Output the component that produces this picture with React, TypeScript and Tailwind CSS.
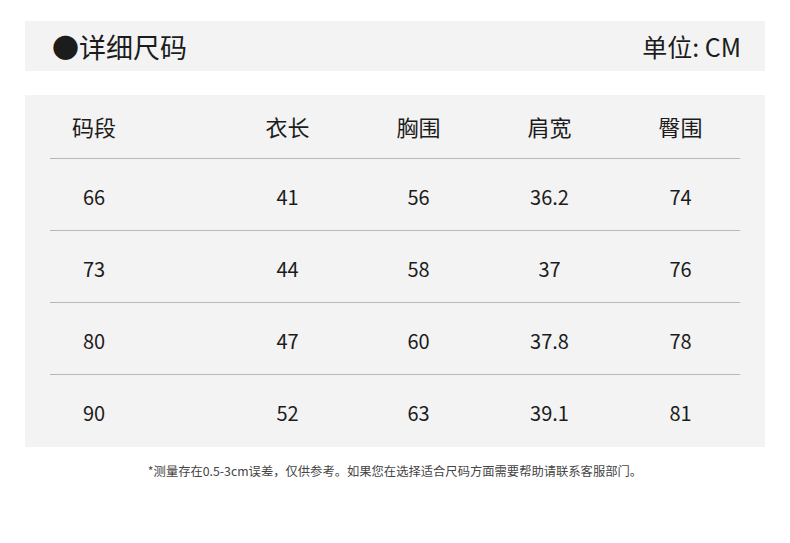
const headers = ["码段", "衣长", "胸围", "肩宽", "臀围"];
const rows = [
  ["66", "41", "56", "36.2", "74"],
  ["73", "44", "58", "37", "76"],
  ["80", "47", "60", "37.8", "78"],
  ["90", "52", "63", "39.1", "81"],
];

const font = { fontFamily: '"Noto Sans CJK SC", "Noto Sans", sans-serif' };

function Row({ cells, head }: { cells: string[]; head?: boolean }) {
  return (
    <div className={`flex items-center overflow-hidden ${head ? "h-[63px] text-[22px]" : "h-[71px] text-[20px] pt-[4px]"}`}>
      {cells.map((c, i) => (
        <div
          key={i}
          className={`shrink-0 text-center ${i === 0 ? "w-[88px]" : "w-[131px]"} ${i === 1 ? "ml-[84px]" : ""}`}
        >
          {c}
        </div>
      ))}
    </div>
  );
}

export default function App() {
  return (
    <div className="w-[790px] h-[543px] bg-white text-[#1c1c1c] pt-[21px] px-[25px]" style={font}>
      <div className="h-[50px] bg-[#f3f3f3] flex items-center justify-between pl-[27px] pr-[24px]">
        <div className="text-[27px] leading-none">●详细尺码</div>
        <div className="text-[25px] leading-none">单位: CM</div>
      </div>

      <div className="mt-[24px] h-[352px] bg-[#f3f3f3] px-[25px]">
        <Row cells={headers} head />
        {rows.map((r, i) => (
          <div key={i} className="border-t border-[#b8b8b8]">
            <Row cells={r} />
          </div>
        ))}
      </div>

      <div className="mt-[15px] text-center text-[12.3px] text-[#444]">
        *测量存在0.5-3cm误差，仅供参考。如果您在选择适合尺码方面需要帮助请联系客服部门。
      </div>
    </div>
  );
}
